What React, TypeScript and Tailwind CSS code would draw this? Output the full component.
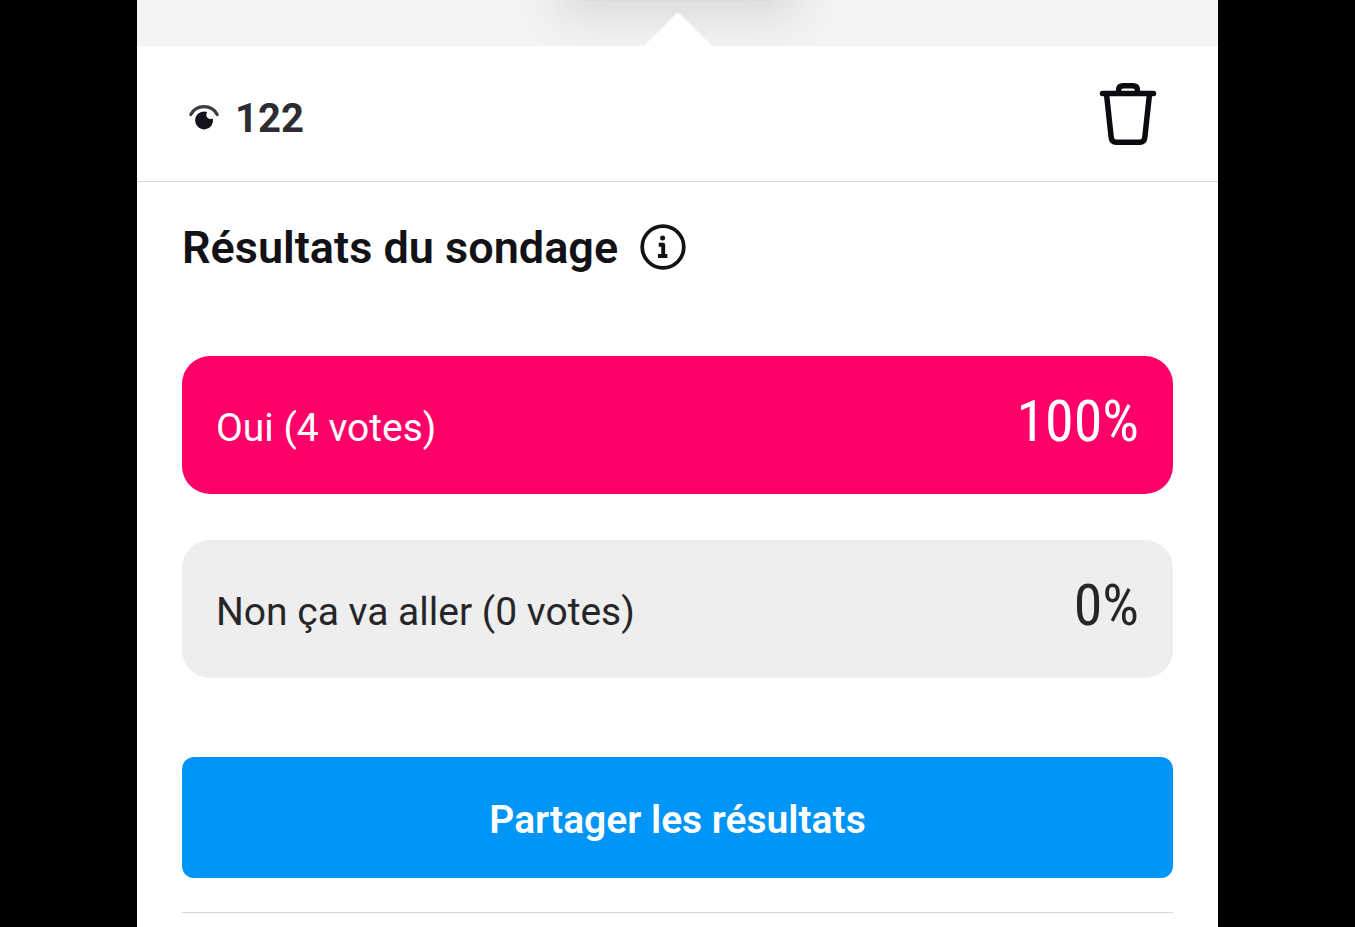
type PollOption = {
  label: string;
  votes: number;
  percent: number;
  leading: boolean;
};

const VIEW_COUNT = 122;

const POLL_OPTIONS: PollOption[] = [
  { label: "Oui", votes: 4, percent: 100, leading: true },
  { label: "Non ça va aller", votes: 0, percent: 0, leading: false }
];

function EyeIcon() {
  return (
    <svg viewBox="0 0 32 32" className="size-8" fill="none" aria-hidden="true">
      <path
        d="M2.800 11.500C5.600 6.300 10.300 3.600 16 3.600s10.400 2.700 13.200 7.900"
        stroke="#3c3c42"
        strokeWidth="3.200"
        strokeLinecap="round"
      />
      <path
        d="M16.300 8.400a9 9 0 1 0 8.600 7.200c-.8.500-2 .7-3.200.3-2.700-.8-3.900-3.100-3.200-5.500.1-.600.4-1.100.8-1.500a9 9 0 0 0-3-.5Z"
        fill="#14141c"
      />
    </svg>
  );
}

function TrashIcon() {
  return (
    <svg
      viewBox="0 0 58 64"
      className="h-16 w-[58px]"
      fill="none"
      stroke="#0c0c10"
      strokeWidth="5.500"
      strokeLinecap="round"
      strokeLinejoin="round"
      aria-hidden="true"
    >
      <path d="M3.500 11.500h51" />
      <path d="M19.500 10.500V8.500c0-3 1.700-4.700 4.700-4.700h9.600c3 0 4.700 1.700 4.700 4.700v2" />
      <path d="M7.500 12l4.700 43.500c.3 3 2 4.700 5 4.700h23.600c3 0 4.700-1.700 5-4.700L50.500 12" />
    </svg>
  );
}

function InfoIcon() {
  return (
    <svg viewBox="0 0 46 46" className="size-[46px]" fill="none" aria-hidden="true">
      <circle cx="23" cy="23" r="20.800" stroke="#121216" strokeWidth="3.700" />
      <circle cx="22.600" cy="14" r="2.500" fill="#121216" />
      <path
        d="M18.800 20.800h4.400v11M18 32h9.400"
        stroke="#121216"
        strokeWidth="3.900"
        strokeLinejoin="round"
      />
    </svg>
  );
}

function PollResult({ label, votes, percent, leading }: PollOption) {
  return (
    <li
      className={`flex h-[138px] items-center justify-between rounded-[28px] px-[34px] ${
        leading ? "bg-[#ff0069] text-white" : "bg-[#eeeeee] text-[#262629]"
      }`}
    >
      <span className="pt-1.5 text-[39px] leading-12">
        {label} ({votes} votes)
      </span>
      <span className="pb-2 font-['Roboto_Condensed','Liberation_Sans_Narrow','Roboto',sans-serif] text-[58px] leading-16">
        {percent}%
      </span>
    </li>
  );
}

export default function App() {
  return (
    <div className="h-screen overflow-hidden bg-black font-['Roboto',sans-serif]">
      <main className="mx-auto min-h-full max-w-[1081px] bg-white">
        <div className="flex h-[46px] flex-col items-center justify-between overflow-hidden bg-[#f4f4f4]">
          <div className="h-px w-[190px] bg-[#dadada] shadow-[0_-14px_50px_26px_rgba(0,0,0,0.13)]" />
          <svg viewBox="0 0 68 34" className="relative h-[34px] w-[68px]" aria-hidden="true">
            <path d="M0 34 32 2q2-2 4 0l32 32Z" fill="#ffffff" />
          </svg>
        </div>

        <header className="flex h-[136px] items-center justify-between border-b border-[#d8d8d8] pr-[61px] pl-[51px]">
          <div className="flex items-center gap-[15px] pt-2.5">
            <EyeIcon />
            <span className="text-[40px] leading-12 font-bold text-[#2c2c32]">{VIEW_COUNT}</span>
          </div>
          <button type="button" aria-label="Supprimer">
            <TrashIcon />
          </button>
        </header>

        <section className="px-[45px]">
          <div className="flex items-center gap-[22px] pt-[38px]">
            <h1 className="text-[45px] leading-14 font-semibold text-[#121216]">
              Résultats du sondage
            </h1>
            <button type="button" aria-label="Informations" className="pb-0.5">
              <InfoIcon />
            </button>
          </div>

          <ul className="mt-20 space-y-[46px]">
            {POLL_OPTIONS.map((option) => (
              <PollResult key={option.label} {...option} />
            ))}
          </ul>

          <button
            type="button"
            className="mt-[79px] h-[121px] w-full rounded-xl bg-[#0095f6] pt-1.5 text-[39px] font-semibold text-white"
          >
            Partager les résultats
          </button>
          <hr className="mt-[34px] border-[#d8d8d8]" />
        </section>
      </main>
    </div>
  );
}
